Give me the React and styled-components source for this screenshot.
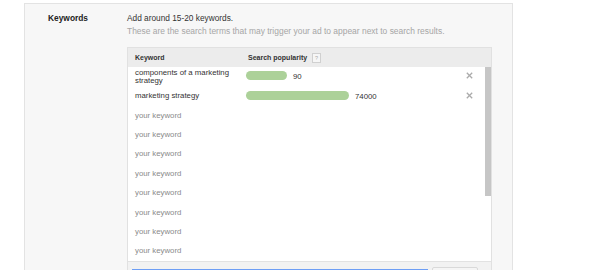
import React from 'react';
import styled, { createGlobalStyle } from 'styled-components';

const GlobalStyle = createGlobalStyle`
  html, body {
    margin: 0;
    padding: 0;
    background: #fff;
    overflow: hidden;
  }
  body {
    font-family: "Liberation Sans", Arial, sans-serif;
    color: #333;
  }
`;

const Page = styled.div`
  display: flex;
  padding: 3px 0 0 24px;
  height: 270px;
  box-sizing: border-box;
  overflow: hidden;
`;

const Panel = styled.section`
  width: 489px;
  box-sizing: border-box;
  background: #f7f7f7;
  border: 1px solid #e3e3e3;
  border-bottom: none;
  display: grid;
  grid-template-columns: 102px 365px;
  align-content: start;
  padding-top: 9px;
`;

const Label = styled.div`
  padding-left: 23px;
  font-size: 8.4px;
  line-height: 11px;
  font-weight: bold;
  color: #222;
`;

const Content = styled.div`
  display: flex;
  flex-direction: column;
`;

const Lead = styled.div`
  font-size: 8.3px;
  line-height: 11px;
  color: #333;
  margin-bottom: 2px;
`;

const Hint = styled.div`
  font-size: 8.45px;
  line-height: 11px;
  color: #a6a6a6;
  margin-bottom: 10px;
  white-space: nowrap;
`;

const Table = styled.div`
  border: 1px solid #e1e1e1;
  border-bottom: none;
  background: #fff;
`;

const Head = styled.div`
  display: grid;
  grid-template-columns: 118px 1fr;
  height: 19px;
  align-items: center;
  background: #ececec;
  font-size: 7px;
  font-weight: bold;
  color: #333;
`;

const HeadCell = styled.div`
  display: flex;
  align-items: center;
  padding-left: ${p => p.$pad}px;
`;

const Help = styled.span`
  display: inline-flex;
  align-items: center;
  justify-content: center;
  width: 7px;
  height: 8px;
  margin-left: 5px;
  border: 1px solid #d0d0d0;
  background: #f6f6f6;
  color: #aaa;
  font-size: 5.5px;
  font-weight: normal;
`;

const Body = styled.div`
  display: flex;
`;

const List = styled.div`
  flex: 1;
`;

const Row = styled.div`
  display: grid;
  grid-template-columns: 118px 1fr 30px;
  height: 19.4px;
  align-items: center;
  font-size: 7.8px;
  line-height: 7.8px;
`;

const Word = styled.div`
  padding-left: 7px;
  color: ${p => (p.$empty ? '#8a8a8a' : '#333')};
`;

const Popularity = styled.div`
  display: flex;
  align-items: center;
  gap: 6px;
  margin-top: -2px;
`;

const Bar = styled.div`
  height: 9px;
  border-radius: 5px;
  background: #acd199;
`;

const Count = styled.span`
  color: #333;
  margin-top: 3px;
`;

const Remove = styled.div`
  display: flex;
  justify-content: flex-start;
  padding-left: 11px;
  margin-top: -2px;
`;

const Track = styled.div`
  width: 6px;
  background: #fff;
`;

const Thumb = styled.div`
  height: 129px;
  background: #c6c6c6;
`;

const Footer = styled.div`
  display: flex;
  align-items: flex-start;
  gap: 4px;
  padding: 5px 0 0 4px;
  height: 12px;
  background: #f2f2f2;
  border-top: 1px solid #e2e2e2;
`;

const Input = styled.div`
  width: 296px;
  height: 16px;
  margin-top: 2px;
  box-sizing: border-box;
  background: #fff;
  border: 1px solid #6d9ef5;
`;

const Button = styled.div`
  width: 46px;
  height: 16px;
  box-sizing: border-box;
  background: #f5f5f5;
  border: 1px solid #d9d9d9;
  border-radius: 2px;
`;

const CloseIcon = () => (
  <svg width="7" height="7" viewBox="0 0 7 7">
    <path d="M0.8 0.8L6.2 6.2M6.2 0.8L0.8 6.2" stroke="#ababab" strokeWidth="1.3" />
  </svg>
);

const keywords = [
  { text: ['components of a marketing', 'strategy'], width: 41, count: '90' },
  { text: ['marketing strategy'], width: 103, count: '74000' },
];

const App = () => (
  <>
    <GlobalStyle />
    <Page>
      <Panel>
        <Label>Keywords</Label>
        <Content>
          <Lead>Add around 15-20 keywords.</Lead>
          <Hint>These are the search terms that may trigger your ad to appear next to search results.</Hint>
          <Table>
            <Head>
              <HeadCell $pad={7}>Keyword</HeadCell>
              <HeadCell $pad={2}>
                Search popularity<Help>?</Help>
              </HeadCell>
            </Head>
            <Body>
              <List>
                {keywords.map(k => (
                  <Row key={k.count}>
                    <Word>
                      {k.text.map(line => (
                        <div key={line}>{line}</div>
                      ))}
                    </Word>
                    <Popularity>
                      <Bar style={{ width: k.width }} />
                      <Count>{k.count}</Count>
                    </Popularity>
                    <Remove>
                      <CloseIcon />
                    </Remove>
                  </Row>
                ))}
                {Array.from({ length: 8 }).map((_, i) => (
                  <Row key={i}>
                    <Word $empty>your keyword</Word>
                  </Row>
                ))}
              </List>
              <Track>
                <Thumb />
              </Track>
            </Body>
            <Footer>
              <Input />
              <Button />
            </Footer>
          </Table>
        </Content>
      </Panel>
    </Page>
  </>
);

export default App;
